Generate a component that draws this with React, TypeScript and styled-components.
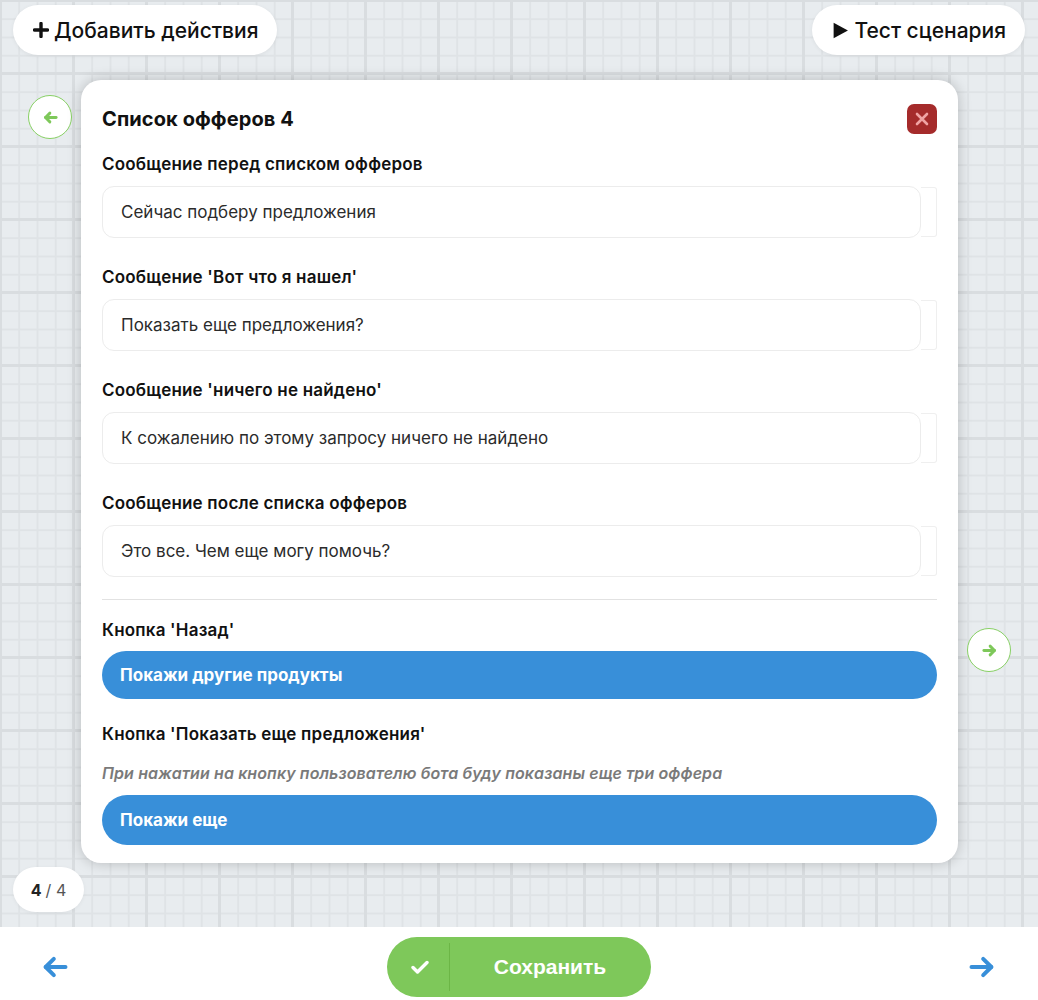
import React from "react";
import styled, { createGlobalStyle } from "styled-components";

const Global = createGlobalStyle`
  html, body { margin: 0; padding: 0; }
  body { font-family: Inter, "Noto Sans", sans-serif; color: #111; }
  * { box-sizing: border-box; }
`;

const Page = styled.div`
  width: 1038px;
  height: 1000px;
  display: flex;
  flex-direction: column;
  overflow: hidden;
`;

const Canvas = styled.div`
  height: 927px;
  background-color: #e8ecef;
  background-image:
    linear-gradient(#d9dde0 3px, transparent 3px),
    linear-gradient(90deg, #d9dde0 3px, transparent 3px),
    linear-gradient(#dfe3e6 2px, transparent 2px),
    linear-gradient(90deg, #dfe3e6 2px, transparent 2px);
  background-size: 73px 73px, 73px 73px, 18.25px 18.25px, 18.25px 18.25px;
  background-position: 0 -1px, -1px 0, 0 0, 0 0;
  display: flex;
  flex-direction: column;
  padding: 5px 13px 0;
`;

const TopBar = styled.div`
  display: flex;
  justify-content: space-between;
  align-items: center;
`;

const PillButton = styled.button`
  height: 50px;
  border: none;
  border-radius: 25px;
  background: #fff;
  padding: 0 19px 0 20px;
  display: flex;
  align-items: center;
  gap: 5px;
  font-family: Inter, sans-serif;
  font-size: 21px;
  font-weight: 500;
  color: #111;
  box-shadow: 0 1px 4px rgba(0, 0, 0, 0.06);
`;

const CardRow = styled.div`
  display: flex;
  margin-top: 25px;
  margin-left: 15px;
`;

const NavCircle = styled.div<{ $side: "left" | "right" }>`
  width: 44px;
  height: 44px;
  border-radius: 50%;
  border: 1px solid #88d065;
  background: #fff;
  display: flex;
  align-items: center;
  justify-content: center;
  align-self: ${(p) => (p.$side === "left" ? "flex-start" : "flex-end")};
  margin-top: ${(p) => (p.$side === "left" ? "15px" : "0")};
  margin-bottom: ${(p) => (p.$side === "right" ? "191px" : "0")};
  margin-left: ${(p) => (p.$side === "right" ? "9px" : "0")};
  margin-right: ${(p) => (p.$side === "left" ? "9px" : "0")};
`;

const Card = styled.div`
  width: 877px;
  background: #fff;
  border-radius: 20px;
  box-shadow: 0 0 14px rgba(0, 0, 0, 0.22);
  padding: 24px 21px 18px;
  display: flex;
  flex-direction: column;
`;

const Header = styled.div`
  display: flex;
  justify-content: space-between;
  align-items: center;
  height: 30px;
  margin-bottom: 20px;
`;

const Title = styled.h2`
  margin: 0;
  font-size: 20px;
  font-weight: 700;
  color: #111;
  letter-spacing: 0.1px;
`;

const CloseButton = styled.div`
  width: 30px;
  height: 30px;
  border-radius: 7px;
  background: #a52b2b;
  display: flex;
  align-items: center;
  justify-content: center;
`;

const Field = styled.div<{ $mb: number }>`
  display: flex;
  flex-direction: column;
  margin-bottom: ${(p) => p.$mb}px;
`;

const Label = styled.div<{ $mb?: number }>`
  font-size: 17px;
  line-height: 20px;
  font-weight: 600;
  color: #111;
  margin-bottom: ${(p) => p.$mb ?? 12}px;
  letter-spacing: 0.2px;
`;

const InputRow = styled.div`
  display: flex;
  height: 52px;
`;

const InputBox = styled.div`
  flex: 1;
  border: 1px solid #ececec;
  border-radius: 12px;
  display: flex;
  align-items: center;
  padding-left: 18px;
  font-size: 17px;
  color: #2b2b2b;
`;

const InputTail = styled.div`
  width: 16px;
  border: 1px solid #efefef;
  border-left: none;
  border-radius: 0 3px 3px 0;
  margin: 1px 0 1px 0;
`;

const Divider = styled.hr`
  width: 100%;
  border: none;
  border-top: 1px solid #e2e2e2;
  margin: 0 0 20px;
`;

const Hint = styled.div`
  font-size: 16px;
  line-height: 20px;
  font-style: italic;
  font-weight: 600;
  color: #7a7a7a;
  margin-bottom: 12px;
  letter-spacing: 0.1px;
`;

const BlueButton = styled.div<{ $mb?: number; $h?: number }>`
  height: ${(p) => p.$h ?? 48}px;
  border-radius: 25px;
  background: #388fd9;
  color: #fff;
  font-weight: 700;
  font-size: 17px;
  display: flex;
  align-items: center;
  padding-left: 18px;
  margin-bottom: ${(p) => p.$mb ?? 0}px;
`;

const Counter = styled.div`
  margin-top: 4px;
  width: 71px;
  height: 45px;
  border-radius: 23px;
  background: #fff;
  display: flex;
  align-items: center;
  justify-content: center;
  font-size: 16px;
  color: #555;
  gap: 4px;
  box-shadow: 0 1px 4px rgba(0, 0, 0, 0.05);
  b { color: #222; font-weight: 700; }
`;

const BottomBar = styled.div`
  flex: 1;
  background: #fff;
  display: flex;
  align-items: center;
  justify-content: space-between;
  padding: 7px 42px 0 41px;
`;

const SaveButton = styled.div`
  width: 264px;
  height: 60px;
  border-radius: 30px;
  background: #7ec85a;
  display: flex;
  align-items: center;
`;

const CheckZone = styled.div`
  width: 63px;
  height: 48px;
  border-right: 1px solid #6cb646;
  display: flex;
  align-items: center;
  justify-content: center;
  padding-left: 4px;
`;

const SaveText = styled.div`
  flex: 1;
  text-align: center;
  color: #fff;
  font-family: "Liberation Sans", Arial, sans-serif;
  font-weight: 700;
  font-size: 21px;
`;

const Arrow = ({ dir, color, size, w }: { dir: "left" | "right"; color: string; size: number; w: number }) => (
  <svg width={size} height={size} viewBox="0 0 24 24" fill="none" stroke={color} strokeWidth={w} strokeLinecap="round" strokeLinejoin="round">
    {dir === "left" ? (
      <>
        <path d="M21 12H4" />
        <path d="M11 5l-7 7 7 7" />
      </>
    ) : (
      <>
        <path d="M3 12h17" />
        <path d="M13 5l7 7-7 7" />
      </>
    )}
  </svg>
);

const fields = [
  ["Сообщение перед списком офферов", "Сейчас подберу предложения"],
  ["Сообщение 'Вот что я нашел'", "Показать еще предложения?"],
  ["Сообщение 'ничего не найдено'", "К сожалению по этому запросу ничего не найдено"],
  ["Сообщение после списка офферов", "Это все. Чем еще могу помочь?"],
];

export default function App() {
  return (
    <Page>
      <Global />
      <Canvas>
        <TopBar>
          <PillButton>
            <svg width="16" height="16" viewBox="0 0 16 16">
              <path d="M8 1.5v13M1.5 8h13" stroke="#111" strokeWidth="3.4" strokeLinecap="round" />
            </svg>
            Добавить действия
          </PillButton>
          <PillButton>
            <svg width="17" height="17" viewBox="0 0 16 16">
              <path d="M1.5 0.8L15 8 1.5 15.2z" fill="#111" />
            </svg>
            Тест сценария
          </PillButton>
        </TopBar>
        <CardRow>
          <NavCircle $side="left">
            <Arrow dir="left" color="#7ec85a" size={15} w={4.6} />
          </NavCircle>
          <Card>
            <Header>
              <Title>Список офферов 4</Title>
              <CloseButton>
                <svg width="14" height="14" viewBox="0 0 14 14">
                  <path d="M2 2l10 10M12 2L2 12" stroke="#f0a3a3" strokeWidth="2.6" strokeLinecap="round" />
                </svg>
              </CloseButton>
            </Header>
            {fields.map(([label, value], i) => (
              <Field key={label} $mb={i === fields.length - 1 ? 22 : 29}>
                <Label>{label}</Label>
                <InputRow>
                  <InputBox>{value}</InputBox>
                  <InputTail />
                </InputRow>
              </Field>
            ))}
            <Divider />
            <Label $mb={11}>Кнопка 'Назад'</Label>
            <BlueButton $mb={25}>Покажи другие продукты</BlueButton>
            <Label $mb={19}>Кнопка 'Показать еще предложения'</Label>
            <Hint>При нажатии на кнопку пользователю бота буду показаны еще три оффера</Hint>
            <BlueButton $h={50}>Покажи еще</BlueButton>
          </Card>
          <NavCircle $side="right">
            <Arrow dir="right" color="#7ec85a" size={15} w={4.6} />
          </NavCircle>
        </CardRow>
        <Counter>
          <b>4</b> / 4
        </Counter>
      </Canvas>
      <BottomBar>
        <Arrow dir="left" color="#388fd9" size={28} w={3.4} />
        <SaveButton>
          <CheckZone>
            <svg width="18" height="14" viewBox="0 0 18 14">
              <path d="M2 7.5l4.5 4.5L16 2.5" stroke="#fff" strokeWidth="3.4" fill="none" strokeLinecap="round" strokeLinejoin="round" />
            </svg>
          </CheckZone>
          <SaveText>Сохранить</SaveText>
        </SaveButton>
        <Arrow dir="right" color="#388fd9" size={28} w={3.4} />
      </BottomBar>
    </Page>
  );
}
